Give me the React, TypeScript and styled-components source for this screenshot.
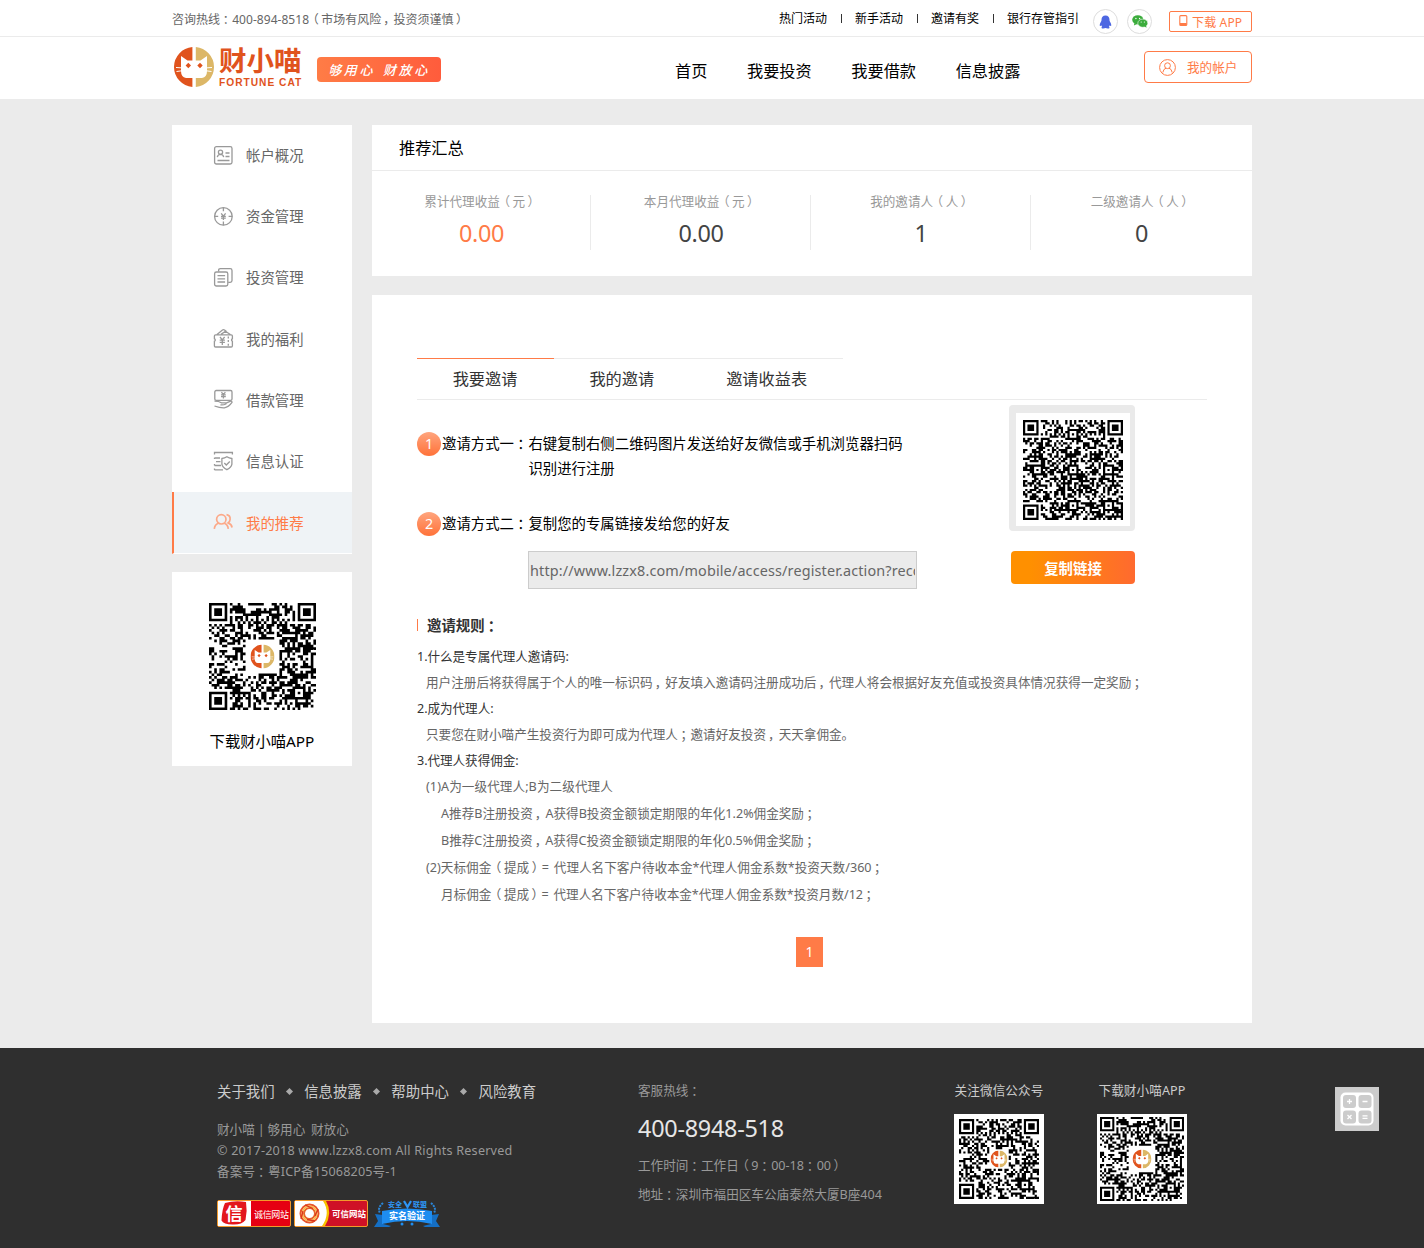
import React from "react";
import styled, { createGlobalStyle } from "styled-components";

const ORANGE = "#ff7b47";

const GlobalStyle = createGlobalStyle`
  * { box-sizing: border-box; }
  html { text-spacing-trim: space-all; }
  body {
    margin: 0;
    background: #ebebeb;
    color: #000;
    font-family: "Noto Sans", "Noto Sans CJK SC", sans-serif;
    font-size: 12.6px;
    font-weight: 400;
    font-kerning: none;
  }
  ul, ol, p, h1, h2, h3 { margin: 0; padding: 0; list-style: none; font-weight: 400; }
  a { color: inherit; text-decoration: none; }
  svg { display: block; flex: none; }
`;

/* Moves a full-width punctuation mark towards the middle of its cell. */
const Punct = styled.span<{ $shift: number }>`
  margin: 0 ${(p) => -p.$shift}em 0 ${(p) => p.$shift}em;
`;
const Phrase = styled.span`
  white-space: nowrap;
`;
const shifts: Record<string, number> = { "：": 0.22, "；": 0.2, "，": 0.16, "（": -0.2, "）": 0.2 };

function Zh({ children }: { children: string }) {
  return (
    <Phrase>
      {children.split(/([：；，（）])/).map((s, i) =>
        i % 2 ? (
          <Punct key={i} $shift={shifts[s]}>
            {s}
          </Punct>
        ) : (
          s
        )
      )}
    </Phrase>
  );
}

const Page = styled.div`
  position: relative;
  width: 1424px;
  height: 1248px;
  display: flex;
  flex-direction: column;
`;
const Container = styled.div`
  width: 1080px;
  margin: 0 auto;
  display: flex;
`;

/* ---------- top bar ---------- */
const TopBar = styled.div`
  height: 37px;
  background: #fff;
  border-bottom: 1px solid #ebebeb;
`;
const TopInner = styled(Container)`
  height: 36px;
  align-items: flex-start;
`;
const Hotline = styled.p`
  font-size: 12px;
  line-height: 18px;
  margin-top: 11px;
  color: #666;
  letter-spacing: 0.04px;
  flex: 1;
`;
const TopLinks = styled.nav`
  display: flex;
  align-items: center;
  margin-top: 10px;
  font-size: 12px;
  line-height: 18px;
`;
const TopSep = styled.i`
  width: 1px;
  height: 9px;
  margin: -2px 13px 0 14px;
  background: #333;
`;
const Social = styled.a<{ $gap: number }>`
  width: 25px;
  height: 25px;
  margin: 9px 0 0 ${(p) => p.$gap}px;
  border: 1px solid #ddd;
  border-radius: 50%;
  display: flex;
  align-items: center;
  justify-content: center;
`;
const Download = styled.a`
  width: 83px;
  height: 21px;
  margin: 11px 0 0 17px;
  border: 1px solid ${ORANGE};
  border-radius: 2px;
  display: flex;
  align-items: center;
  padding-left: 9px;
  gap: 4px;
  color: ${ORANGE};
  font-size: 12px;
  line-height: 18px;
  white-space: nowrap;
  span { padding-top: 2px; letter-spacing: 0.15px; }
  svg { margin-top: -3px; }
`;

/* ---------- header ---------- */
const Header = styled.header`
  height: 62px;
  background: #fff;
`;
const HeaderInner = styled(Container)`
  height: 62px;
`;
const Brand = styled.a`
  display: flex;
  width: 145px;
  padding: 10px 0 0 2px;
  gap: 5px;
`;
const BrandText = styled.div`
  width: 86px;
  color: #e0531d;
`;
const BrandName = styled.div`
  font-size: 27.5px;
  line-height: 28px;
  font-weight: 700;
  white-space: nowrap;
`;
const BrandSub = styled.div`
  margin-top: 2px;
  font: 700 10.2px/11px "Liberation Sans", sans-serif;
  letter-spacing: 1px;
  white-space: nowrap;
`;
const Slogan = styled.div`
  width: 124px;
  height: 25px;
  margin-top: 20px;
  border-radius: 4px;
  background: linear-gradient(90deg, #ff7c46, #ff5c3c);
  color: #fff;
  display: flex;
  align-items: center;
  justify-content: center;
  gap: 8px;
  font: italic 500 13px/25px "Noto Sans CJK SC", sans-serif;
  letter-spacing: 2.6px;
`;
const MainNav = styled.nav`
  display: flex;
  gap: 39.6px;
  margin-left: 234px;
  font-size: 16.2px;
  line-height: 26px;
  padding-top: 21px;
`;
const Account = styled.a`
  width: 108px;
  height: 32px;
  margin: 14px 0 0 auto;
  border: 1px solid ${ORANGE};
  border-radius: 4px;
  color: ${ORANGE};
  display: flex;
  align-items: center;
  gap: 11px;
  padding-left: 14px;
  span { padding-bottom: 2px; }
`;

/* ---------- main ---------- */
const Main = styled(Container)`
  gap: 20px;
  padding-top: 26px;
  height: 949px;
  align-items: flex-start;
`;
const Aside = styled.aside`
  width: 180px;
  display: flex;
  flex-direction: column;
  gap: 18px;
`;
const Menu = styled.ul`
  background: #fff;
  height: 429px;
`;
const MenuItem = styled.li<{ $active?: boolean }>`
  height: ${(p) => (p.$active ? 61.8 : 61.2)}px;
  display: flex;
  align-items: center;
  gap: 12px;
  padding-left: ${(p) => (p.$active ? 39 : 41)}px;
  border-left: ${(p) => (p.$active ? `2px solid ${ORANGE}` : "0")};
  background: ${(p) => (p.$active ? "#eff3f6" : "#fff")};
  color: ${(p) => (p.$active ? ORANGE : "#666")};
  font-size: 14.4px;
  line-height: 24px;
  border-bottom: 1px solid #fff;
  span { padding-top: 2px; }
  svg { color: ${(p) => (p.$active ? "#fca989" : "#999")}; }
`;
const AppCard = styled.section`
  height: 194px;
  background: #fff;
  display: flex;
  flex-direction: column;
  align-items: center;
  padding-top: 31px;
  font-size: 15.3px;
  line-height: 24px;
  p { margin-top: 19px; }
`;
const Content = styled.div`
  width: 880px;
  display: flex;
  flex-direction: column;
  gap: 19px;
`;
const Card = styled.section`
  background: #fff;
`;
const CardTitle = styled.h2`
  height: 46px;
  padding-left: 27px;
  border-bottom: 1px solid #ebebeb;
  font-size: 16.2px;
  line-height: 47px;
`;
const Stats = styled.div`
  display: grid;
  grid-template-columns: 219px 220px 220px 220px;
  height: 105px;
  padding-top: 24px;
`;
const Stat = styled.div<{ $last?: boolean }>`
  height: 55px;
  text-align: center;
  border-right: ${(p) => (p.$last ? "0" : "1px solid #ebebeb")};
`;
const StatLabel = styled.div`
  color: #999;
  line-height: 14px;
`;
const StatValue = styled.div<{ $hot?: boolean }>`
  margin-top: 9px;
  padding-left: 1px;
  font-size: 23.4px;
  line-height: 30px;
  letter-spacing: -0.3px;
  color: ${(p) => (p.$hot ? ORANGE : "#444")};
`;
const InviteCard = styled(Card)`
  height: 728px;
  padding: 63px 45px 0;
`;
const Tabs = styled.div`
  display: flex;
  height: 42px;
  border-bottom: 1px solid #ebebeb;
`;
const Tab = styled.a<{ $active?: boolean }>`
  padding: 0 36.3px 0 35.7px;
  border-top: 1px solid ${(p) => (p.$active ? ORANGE : "#ebebeb")};
  font-size: 16.2px;
  line-height: 41px;
  height: 41px;
  color: #333;
  white-space: nowrap;
`;
const InviteBody = styled.div`
  display: flex;
  height: 208px;
`;
const Steps = styled.div`
  width: 592px;
  padding-top: 31px;
  font-size: 14.4px;
  line-height: 25px;
`;
const Step = styled.div`
  display: flex;
  height: 80px;
`;
const StepLabel = styled.div`
  width: 86.4px;
`;
const StepText = styled.p`
  width: 376px;
  white-space: nowrap;
`;
const StepNo = styled.i`
  width: 24px;
  height: 24px;
  margin: 1px 1px 0 0;
  border-radius: 50%;
  background: linear-gradient(#ffa57e, #ff7239);
  color: #fff;
  font-style: normal;
  text-align: center;
  line-height: 23px;
`;
const LinkInput = styled.input`
  display: block;
  width: 389px;
  height: 38px;
  margin: -40px 0 0 111px;
  padding: 1px;
  border: 1px solid #ccc;
  background: #ebebeb;
  color: #666;
  font: 14.4px "Noto Sans", sans-serif;
  letter-spacing: 0.15px;
  outline: none;
`;
const Share = styled.div`
  width: 126px;
  padding-top: 5px;
`;
const Frame = styled.div`
  width: 126px;
  height: 126px;
  border-style: solid;
  border-color: #eaeaea;
  border-width: 8px 5px 5px 7px;
  border-radius: 4px;
  padding: 7px;
`;
const CopyButton = styled.button`
  display: block;
  width: 124px;
  height: 33px;
  margin: 20px 0 0 2px;
  padding: 0;
  border: 0;
  border-radius: 4px;
  background: linear-gradient(90deg, #ff9000 15%, #ff6a2f);
  color: #fff;
  font: 700 14.4px/33px "Noto Sans CJK SC", sans-serif;
`;
const RulesTitle = styled.h3`
  display: flex;
  align-items: center;
  gap: 9px;
  height: 36px;
  padding-bottom: 1px;
  font-size: 14.4px;
  line-height: 24px;
  font-weight: 700;
  color: #333;
  &::before { content: ""; width: 1px; height: 12px; margin-top: -2px; background: ${ORANGE}; }
`;
const Rule = styled.p<{ $level: number; $h: number; $ls?: number; $ws?: number }>`
  height: ${(p) => p.$h}px;
  line-height: ${(p) => p.$h}px;
  padding-left: ${(p) => [0, 9, 24][p.$level]}px;
  color: ${(p) => (p.$level ? "#666" : "#333")};
  letter-spacing: ${(p) => p.$ls || 0}px;
  word-spacing: ${(p) => p.$ws || 0}px;
  white-space: nowrap;
`;
const Pager = styled.div`
  display: flex;
  margin: 29px 0 0 379px;
`;
const PageNo = styled.a`
  width: 27px;
  height: 30px;
  background: ${ORANGE};
  color: #fff;
  font-size: 14px;
  line-height: 30px;
  text-align: center;
`;

/* ---------- footer ---------- */
const Footer = styled.footer`
  height: 200px;
  background: #2f2f2f;
  color: #999;
`;
const FooterInner = styled(Container)`
  padding: 32px 0 0 45px;
`;
const FooterCol = styled.div<{ $w: number }>`
  width: ${(p) => p.$w}px;
  white-space: nowrap;
`;
const FooterLinks = styled.div`
  display: flex;
  align-items: center;
  color: #ccc;
  font-size: 14.4px;
  line-height: 24px;
  margin-bottom: 15px;
`;
const Diamond = styled.i`
  width: 5px;
  height: 5px;
  margin: -1px 12.6px 0 12px;
  background: #aaa;
  transform: rotate(45deg);
`;
const Legal = styled.p<{ $ls?: number; $ws?: number }>`
  line-height: 21px;
  letter-spacing: ${(p) => p.$ls || 0}px;
  word-spacing: ${(p) => p.$ws || 0}px;
`;
const Badges = styled.div`
  display: flex;
  gap: 3px;
  margin-top: 18px;
`;
const Phone = styled.div`
  margin: 11px 0 8px;
  color: #e6e6e6;
  font-size: 23.4px;
  line-height: 30px;
  letter-spacing: -0.25px;
`;
const Line = styled.p<{ $h: number; $ls?: number }>`
  line-height: ${(p) => p.$h}px;
  letter-spacing: ${(p) => p.$ls || 0}px;
`;
const QrCol = styled.div`
  width: 90px;
  margin-right: 53px;
  text-align: center;
  color: #ccc;
  white-space: nowrap;
  p { line-height: 22px; margin-bottom: 12px; letter-spacing: 0.1px; }
`;
const QrBox = styled.div<{ $pad: number }>`
  width: 90px;
  height: 90px;
  background: #fff;
  padding: ${(p) => p.$pad}px;
`;
const Calculator = styled.a`
  position: absolute;
  left: 1335px;
  top: 1087px;
  width: 44px;
  height: 44px;
  background: #ccc;
  display: flex;
  align-items: center;
  justify-content: center;
`;

/* ---------- drawings ---------- */
function CatMark({ size }: { size: number }) {
  return (
    <svg width={size} height={size} viewBox="0 0 40 40">
      <path d="M18.4.064A20 20 0 0 0 18.4 39.936V31H12Q7 30 7 24V9L13.5 13.5H18.4Z" fill="#e0531d" />
      <path d="M21.8.081A20 20 0 0 1 21.8 39.919V31H28Q33 30 33 24V9L26.5 13.5H21.8Z" fill="#dcb767" />
      <path d="M14.3 15.8l2.7 2.7-2.7 2.7-2.7-2.7zM26 15.8l2.7 2.7-2.7 2.7-2.7-2.7z" fill="#e0531d" />
      <path d="M2 20.5l6 .4M2.5 24.5l6-.8M38 20.5l-6 .4M37.5 24.5l-6-.8" stroke="#fff" strokeWidth="1" />
    </svg>
  );
}

function qrPath(n: number, seed: number, aligns: [number, number][], hole: number) {
  let s = seed;
  const rnd = () => {
    s = (s * 1103515245 + 12345) & 0x7fffffff;
    return (s >> 12) / 524288;
  };
  const mid = (n - 1) / 2;
  let d = "";
  for (let y = 0; y < n; y++) {
    for (let x = 0; x < n; x++) {
      let on = rnd() < 0.52;
      if (x === 6 || y === 6) on = (x + y) % 2 === 0;
      for (const [ax, ay] of aligns) {
        const r = Math.max(Math.abs(x - ax), Math.abs(y - ay));
        if (r <= 2) on = r !== 1;
      }
      for (const [fx, fy] of [[3, 3], [n - 4, 3], [3, n - 4]]) {
        const r = Math.max(Math.abs(x - fx), Math.abs(y - fy));
        if (r <= 4) on = r !== 2 && r !== 4;
      }
      if (hole && Math.abs(x - mid) <= hole && Math.abs(y - mid) <= hole) on = false;
      if (on) d += `M${x} ${y}h1v1h-1z`;
    }
  }
  return d;
}

function Qr(p: { size: number; n: number; seed: number; aligns: [number, number][]; hole?: number; mark?: number }) {
  const k = p.size / p.n;
  const m = p.mark || 0;
  return (
    <svg width={p.size} height={p.size}>
      <path transform={`scale(${k})`} d={qrPath(p.n, p.seed, p.aligns, p.hole || 0)} fill="#000" />
      {m > 0 && (
        <g transform={`translate(${(p.size - m) / 2} ${(p.size - m) / 2})`}>
          <CatMark size={m} />
        </g>
      )}
    </svg>
  );
}

const icons: Record<string, React.ReactNode> = {
  overview: (
    <>
      <rect x="1.6" y="1.6" width="17.4" height="17.4" rx="1.8" />
      <circle cx="7.5" cy="7.2" r="2.1" />
      <path d="M4.3 12.2q.4-2.8 3.2-2.9 2.8.1 3.2 2.9M12.5 8h4M12.5 11.5h4M4.5 15.5h12" />
    </>
  ),
  funds: (
    <>
      <circle cx="10.4" cy="10.4" r="8.8" />
      <path d="M10.4 1.6v3.6M10.4 15.6v3.6M1.6 10.4h3.6M15.6 10.4h3.6M8.2 7.4l2.2 2.8 2.2-2.8M10.4 10v4M8 10.3h4.8M8 12.2h4.8" />
    </>
  ),
  invest: (
    <>
      <rect x="1.6" y="5" width="13.2" height="14" rx="1.8" />
      <path d="M5.6 4.6V3.4q0-1.8 1.8-1.8h9.8q1.8 0 1.8 1.8v10.2q0 1.8-1.8 1.8h-2M4.5 8.6h7.6M4.5 11.8h7.6M4.5 15h7.6" />
    </>
  ),
  welfare: (
    <>
      <path d="M2.6 6.8h15.6q1.2 0 1.2 1.2v2.8q-.9.2-.9 1.2t.9 1.2v4.6q0 1.2-1.2 1.2H2.6q-1.2 0-1.2-1.2v-4.6q.9-.2.9-1.2t-.9-1.2V8q0-1.2 1.2-1.2zM4 6.5l5.5-4.5q1-.8 2 0l2 1.6M8 6.4l4.5-3.2 4.8 3.3M7 9l2.3 2.8L11.6 9M9.3 11.8V17M6.7 12.2h5.2M6.7 14.4h5.2" />
      <path d="M15.3 8.5v10" strokeDasharray="2 1.6" />
    </>
  ),
  loan: (
    <>
      <rect x="1.8" y="1.5" width="17.2" height="9.8" rx="1.4" />
      <path d="M8.4 3.2l2 2.2 2-2.2M10.4 5v4.6M8 5.8h4.8M8 7.6h4.8M1.5 12.2q4.5 0 6.8 1.6h4q1 .2.6 1.2-2.5 1.2-5.5.8M13 14.2l4.6-2q1.6-.2 1.4 1.2-3.4 4.8-7.6 5.4-4.4.2-9.9-1.8" />
    </>
  ),
  verify: (
    <>
      <path d="M1.5 3.5V1.5H19.4V3.5M1.5 7H7M3 10.7H7.5M1.5 14.5H8M1.5 6.8V8M1.5 13v1.5M1.5 18.9H10M1.5 17.5v1.4" />
      <path d="M13.9 5.8q2.2 1.5 5 1.7v5.7q-.5 3.4-5 5.5-4.5-2.1-5-5.5V7.5q2.8-.2 5-1.7zM11.3 12l2 2 3.5-3.5" />
    </>
  ),
  referral: (
    <g strokeWidth="1.7">
      <circle cx="8.3" cy="7.3" r="4.7" />
      <path d="M1.3 16.8q.5-4.3 4-5.6M11.3 11.2q3.5 1.3 4 5.6M13.5 2.7q4 .8 3.6 4.6-.2 2.4-2 3.6 3.5 1.3 4 4.6" />
    </g>
  ),
};

function MenuIcon({ name }: { name: string }) {
  return (
    <svg width="21" height="21" viewBox="0 0 21 21" fill="none" stroke="currentColor" strokeWidth="1.3">
      {icons[name]}
    </svg>
  );
}

const menu = [
  ["overview", "帐户概况"],
  ["funds", "资金管理"],
  ["invest", "投资管理"],
  ["welfare", "我的福利"],
  ["loan", "借款管理"],
  ["verify", "信息认证"],
  ["referral", "我的推荐"],
];
const stats = [
  ["累计代理收益（元）", "0.00"],
  ["本月代理收益（元）", "0.00"],
  ["我的邀请人（人）", "1"],
  ["二级邀请人（人）", "0"],
];
const rules: { t: string; level: number; h: number; ls?: number; ws?: number }[] = [
  { t: "1.什么是专属代理人邀请码:", level: 0, h: 26, ls: -0.05 },
  { t: "用户注册后将获得属于个人的唯一标识码，好友填入邀请码注册成功后，代理人将会根据好友充值或投资具体情况获得一定奖励；", level: 1, h: 26 },
  { t: "2.成为代理人:", level: 0, h: 26, ls: -0.05 },
  { t: "只要您在财小喵产生投资行为即可成为代理人；邀请好友投资，天天拿佣金。", level: 1, h: 26 },
  { t: "3.代理人获得佣金:", level: 0, h: 26, ls: -0.05 },
  { t: "(1)A为一级代理人;B为二级代理人", level: 1, h: 26, ls: 0.08 },
  { t: "A推荐B注册投资，A获得B投资金额锁定期限的年化1.2%佣金奖励；", level: 2, h: 27 },
  { t: "B推荐C注册投资，A获得C投资金额锁定期限的年化0.5%佣金奖励；", level: 2, h: 27 },
  { t: "(2)天标佣金（提成）= 代理人名下客户待收本金*代理人佣金系数*投资天数/360；", level: 1, h: 27, ls: 0.02, ws: 1.5 },
  { t: "月标佣金（提成）= 代理人名下客户待收本金*代理人佣金系数*投资月数/12；", level: 2, h: 27, ls: -0.02, ws: 1.5 },
];

const V6: [number, number][] = [[34, 34]];
const V5: [number, number][] = [[30, 30]];
const V7: [number, number][] = [[22, 6], [6, 22], [22, 22], [38, 22], [22, 38], [38, 38]];
const cjk = '"Noto Sans CJK SC", sans-serif';

const Ribbon = styled.svg`
  margin-left: 3px;
`;

function TrustBadges() {
  return (
    <Badges>
      <svg width="74" height="27">
        <rect x=".5" y=".5" width="73" height="26" rx="1.5" fill="#e60012" stroke="#f39a2b" />
        <path d="M1 1h33v25H1z" fill="#fff" />
        <path d="M8 3q10-3 21-1 1.5 9-.5 18-4 5-13 4.5-9 0-11-4Q5 9 8 3z" fill="#e3161d" />
        <text x="8.5" y="20" fontSize="17" fontWeight="700" fill="#fff" fontFamily={cjk}>信</text>
        <text x="37" y="17.5" fontSize="9" fill="#fff" fontFamily={cjk} textLength="35">诚信网站</text>
      </svg>
      <svg width="74" height="27">
        <rect x=".5" y=".5" width="73" height="26" rx="1.5" fill="#cf1126" stroke="#f39a2b" />
        <path d="M1 1h29q7 12 0 25H1z" fill="#fff" />
        <path d="M29 1q8 12-1 25h3q8-13 1-25z" fill="#f8c400" />
        <g fill="none" strokeWidth="2">
          <circle cx="15.5" cy="13.5" r="9" stroke="#e8542a" />
          <circle cx="15.5" cy="13.5" r="5.5" stroke="#e8642a" />
          <circle cx="15.5" cy="13.5" r="7.2" stroke="#f9b94a" strokeWidth="1.6" />
          <path d="M11 5l8 3.5M24 9l-3 7M21 21l-8-1.5M7 19l2-8" stroke="#d9341c" strokeWidth="1.3" />
        </g>
        <text x="38" y="17" fontSize="8.5" fontWeight="700" fill="#fff" fontFamily={cjk} textLength="34">可信网站</text>
      </svg>
      <Ribbon width="68" height="27">
        <path d="M1 14l8 1v9l8 2-2 1H0l4-6zM65 14l-8 1v9l-8 2 2 1h15l-4-6z" fill="#156fc4" />
        <path d="M8 11q25-5 50 0v13q-25-6-50 0z" fill="#1e8df0" />
        <path d="M9 3q-6 5-3 10M57 3q6 5 3 10" stroke="#2b86d8" strokeWidth="2" strokeDasharray="2 1" fill="none" />
        <path d="M30 1l3.5 6 3.5-6" stroke="#2d96f5" strokeWidth="2.2" fill="none" />
        <text x="14" y="7" fontSize="7" fontWeight="700" fill="#2d96f5" fontFamily={cjk}>安全</text>
        <text x="39" y="7" fontSize="7" fontWeight="700" fill="#2d96f5" fontFamily={cjk}>联盟</text>
        <text x="15" y="18.5" fontSize="9" fontWeight="700" fill="#fff" fontFamily={cjk}>实名验证</text>
        <circle cx="28" cy="24" r="1.5" fill="#1e8df0" />
        <circle cx="38" cy="24" r="1.5" fill="#1e8df0" />
      </Ribbon>
    </Badges>
  );
}

export default function App() {
  return (
    <Page>
      <GlobalStyle />
      <TopBar>
        <TopInner>
          <Hotline><Zh>咨询热线：400-894-8518（市场有风险，投资须谨慎）</Zh></Hotline>
          <TopLinks>
            <a>热门活动</a>
            <TopSep />
            <a>新手活动</a>
            <TopSep />
            <a>邀请有奖</a>
            <TopSep />
            <a>银行存管指引</a>
          </TopLinks>
          <Social $gap={14}>
            <svg width="13" height="14" viewBox="0 0 13 14">
              <path d="M6.5.5c2.7 0 4 1.9 4 4.3 0 1 .2 1.4.8 2.4.8 1.3 1.2 2.7.8 3.7-.4.5-1-.1-1.4-.7-.2.8-.5 1.2-.9 1.6.6.3.9.7.7 1.1-.5.9-3 .7-4 .1-1 .6-3.5.8-4-.1-.2-.4.1-.8.7-1.1-.4-.4-.7-.8-.9-1.6-.4.6-1 1.2-1.4.7-.4-1 0-2.4.8-3.7.6-1 .8-1.4.8-2.4C2.5 2.4 3.8.5 6.5.5z" fill="#4d67e2" />
            </svg>
          </Social>
          <Social $gap={9}>
            <svg width="16" height="13" viewBox="0 0 16 13">
              <ellipse cx="5.8" cy="4.8" rx="5.6" ry="4.6" fill="#3bac3c" />
              <path d="M2.5 8l-.6 2.4L5 9z" fill="#3bac3c" />
              <ellipse cx="10.8" cy="8.2" rx="5" ry="4.1" fill="#3bac3c" stroke="#fff" strokeWidth=".6" />
              <path d="M12.5 11.5l2 1.3-.4-2.3z" fill="#3bac3c" />
              <g fill="#fff">
                <circle cx="3.9" cy="3.5" r=".7" />
                <circle cx="7.6" cy="3.5" r=".7" />
                <circle cx="9.2" cy="7" r=".6" />
                <circle cx="12.4" cy="7" r=".6" />
              </g>
            </svg>
          </Social>
          <Download>
            <svg width="9" height="11" viewBox="0 0 9 11">
              <rect x=".8" y=".6" width="7" height="9.8" rx="1" fill="none" stroke={ORANGE} strokeWidth="1.1" />
              <path d="M1 8h6.6v2H1z" fill={ORANGE} />
            </svg>
            <span>下载 APP</span>
          </Download>
        </TopInner>
      </TopBar>

      <Header>
        <HeaderInner>
          <Brand>
            <CatMark size={40} />
            <BrandText>
              <BrandName>财小喵</BrandName>
              <BrandSub>FORTUNE CAT</BrandSub>
            </BrandText>
          </Brand>
          <Slogan>
            <span>够用心</span>
            <span>财放心</span>
          </Slogan>
          <MainNav>
            <a>首页</a>
            <a>我要投资</a>
            <a>我要借款</a>
            <a>信息披露</a>
          </MainNav>
          <Account>
            <svg width="17" height="17" viewBox="0 0 17 17" fill="none" stroke={ORANGE}>
              <circle cx="8.5" cy="8.5" r="7.9" />
              <circle cx="8.5" cy="6.7" r="2.9" />
              <path d="M3.8 13.5q.7-3.8 3.2-4.3M13.2 13.5q-.7-3.8-3.2-4.3" />
            </svg>
            <span>我的帐户</span>
          </Account>
        </HeaderInner>
      </Header>

      <Main>
        <Aside>
          <Menu>
            {menu.map(([icon, label]) => (
              <MenuItem key={icon} $active={icon === "referral"}>
                <MenuIcon name={icon} />
                <span>{label}</span>
              </MenuItem>
            ))}
          </Menu>
          <AppCard>
            <Qr size={107} n={41} seed={77} aligns={V6} hole={6} mark={24} />
            <p>下载财小喵APP</p>
          </AppCard>
        </Aside>

        <Content>
          <Card>
            <CardTitle>推荐汇总</CardTitle>
            <Stats>
              {stats.map(([label, value], i) => (
                <Stat key={label} $last={i === 3}>
                  <StatLabel><Zh>{label}</Zh></StatLabel>
                  <StatValue $hot={i === 0}>{value}</StatValue>
                </Stat>
              ))}
            </Stats>
          </Card>

          <InviteCard>
            <Tabs>
              <Tab $active>我要邀请</Tab>
              <Tab>我的邀请</Tab>
              <Tab>邀请收益表</Tab>
            </Tabs>
            <InviteBody>
              <Steps>
                <Step>
                  <StepNo>1</StepNo>
                  <StepLabel><Zh>邀请方式一：</Zh></StepLabel>
                  <StepText>
                    右键复制右侧二维码图片发送给好友微信或手机浏览器扫码
                    <br />
                    识别进行注册
                  </StepText>
                </Step>
                <Step>
                  <StepNo>2</StepNo>
                  <StepLabel><Zh>邀请方式二：</Zh></StepLabel>
                  <StepText>复制您的专属链接发给您的好友</StepText>
                </Step>
                <LinkInput readOnly value="http://www.lzzx8.com/mobile/access/register.action?recommend=" />
              </Steps>
              <Share>
                <Frame>
                  <Qr size={100} n={45} seed={4211} aligns={V7} />
                </Frame>
                <CopyButton>复制链接</CopyButton>
              </Share>
            </InviteBody>
            <RulesTitle><Zh>邀请规则：</Zh></RulesTitle>
            {rules.map((r) => (
              <Rule key={r.t} $level={r.level} $h={r.h} $ls={r.ls} $ws={r.ws}>
                <Zh>{r.t}</Zh>
              </Rule>
            ))}
            <Pager>
              <PageNo>1</PageNo>
            </Pager>
          </InviteCard>
        </Content>
      </Main>

      <Footer>
        <FooterInner>
          <FooterCol $w={421}>
            <FooterLinks>
              <a>关于我们</a>
              <Diamond />
              <a>信息披露</a>
              <Diamond />
              <a>帮助中心</a>
              <Diamond />
              <a>风险教育</a>
            </FooterLinks>
            <Legal $ws={-0.4}>财小喵 | 够用心&nbsp; 财放心</Legal>
            <Legal $ls={0.22}>© 2017-2018 www.lzzx8.com All Rights Reserved</Legal>
            <Legal $ls={0.15}><Zh>备案号：粤ICP备15068205号-1</Zh></Legal>
            <TrustBadges />
          </FooterCol>
          <FooterCol $w={316}>
            <Line $h={22}><Zh>客服热线：</Zh></Line>
            <Phone>400-8948-518</Phone>
            <Line $h={29}><Zh>工作时间：工作日（9：00-18：00）</Zh></Line>
            <Line $h={29}><Zh>地址：深圳市福田区车公庙泰然大厦B座404</Zh></Line>
          </FooterCol>
          <QrCol>
            <p>关注微信公众号</p>
            <QrBox $pad={5}>
              <Qr size={80} n={37} seed={913} aligns={V5} hole={4} mark={17} />
            </QrBox>
          </QrCol>
          <QrCol>
            <p>下载财小喵APP</p>
            <QrBox $pad={3}>
              <Qr size={84} n={41} seed={77} aligns={V6} hole={6} mark={19} />
            </QrBox>
          </QrCol>
        </FooterInner>
      </Footer>

      <Calculator>
        <svg width="34" height="34" viewBox="0 0 34 34">
          <rect x=".5" y=".5" width="33" height="33" rx="5" fill="#fff" />
          <g fill="#ccc">
            <rect x="3" y="3" width="13" height="13" rx="3" />
            <rect x="18.5" y="3" width="13" height="13" rx="3" />
            <rect x="3" y="18.5" width="13" height="13" rx="3" />
            <rect x="18.5" y="18.5" width="13" height="13" rx="3" />
          </g>
          <path d="M7 9.5h5M9.5 7v5M22.5 9.5h5M7.5 23l4 4M11.5 23l-4 4M22.5 23.8h5M22.5 26.3h5" stroke="#fff" strokeWidth="1.3" />
        </svg>
      </Calculator>
    </Page>
  );
}
